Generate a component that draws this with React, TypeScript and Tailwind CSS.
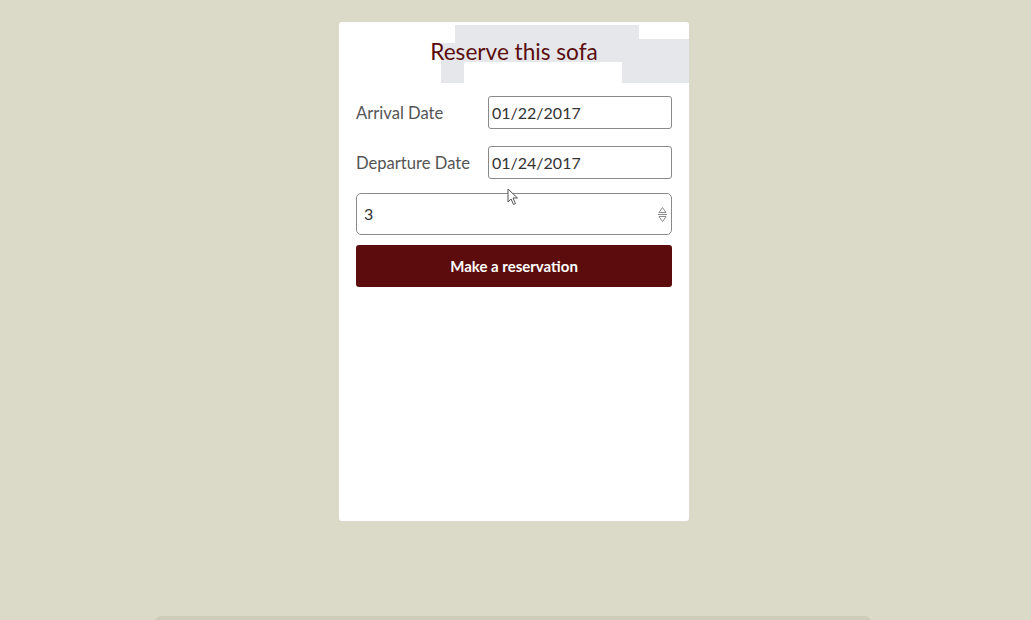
import React from "react";

export default function App() {
  const font = { fontFamily: '"Source Sans Pro", Lato, "Open Sans", sans-serif' };
  return (
    <div className="relative w-[1031px] h-[620px] overflow-hidden bg-[#dbd9c7]" style={font}>
      <div className="flex pt-[22px] pl-[339px]">
        <div className="relative w-[350px] h-[499px] bg-white rounded-[3px] px-[17px]">
          {/* gif artifact blocks */}
          <div className="absolute left-[116px] top-[3px] w-[184px] h-[37px] bg-[#e6e7eb]" />
          <div className="absolute left-[283px] top-[17px] w-[67px] h-[44px] bg-[#e6e7eb]" />
          <div className="absolute left-[102px] top-[21px] w-[23px] h-[40px] bg-[#e6e7eb]" />
          <h1 className="relative pt-[15px] text-center text-[22.6px] leading-[30px] text-[#5a0d0d]">
            Reserve this sofa
          </h1>
          <div className="relative mt-[29px] flex flex-col">
            <div className="flex items-center h-[33px]">
              <div className="w-[132px] pt-[2px] text-[16.6px] text-[#555]">Arrival Date</div>
              <div className="flex-1 h-[33px] border border-[#8a8a8a] rounded-[3px] flex items-center pl-[3px] text-[16px] text-[#333]">
                01/22/2017
              </div>
            </div>
            <div className="flex items-center h-[33px] mt-[17px]">
              <div className="w-[132px] pt-[2px] text-[16.6px] text-[#555]">Departure Date</div>
              <div className="flex-1 h-[33px] border border-[#8a8a8a] rounded-[3px] flex items-center pl-[3px] text-[16px] text-[#333]">
                01/24/2017
              </div>
            </div>
            <div className="mt-[14px] h-[42px] border border-[#8a8a8a] rounded-[5px] flex items-center justify-between pl-[7px] pr-[4px] text-[16px] text-[#333]">
              <span>3</span>
              <svg width="9" height="18" viewBox="0 0 9 18" fill="none" stroke="#808080" strokeWidth="0.9">
                <path d="M4.5 2.5 L8 7.5 H1 Z" />
                <path d="M0 9.5 H9" />
                <path d="M4.5 16.5 L8 11.5 H1 Z" />
              </svg>
            </div>
            <button className="mt-[10px] h-[42px] w-full rounded-[3px] bg-[#5c0c0c] text-white font-bold text-[15px]">
              Make a reservation
            </button>
          </div>
          {/* mouse cursor */}
          <svg className="absolute left-[168px] top-[166px]" width="12" height="18" viewBox="0 0 12 18">
            <path d="M1 1 L1 14 L4 11 L6.5 16.5 L8.5 15.5 L6 10 L10.5 10 Z" fill="#fff" stroke="#555" strokeWidth="1" />
          </svg>
        </div>
      </div>
      <div className="absolute left-[155px] top-[616px] w-[716px] h-[10px] rounded-t-[6px] bg-[#cfccb9]" />
    </div>
  );
}
